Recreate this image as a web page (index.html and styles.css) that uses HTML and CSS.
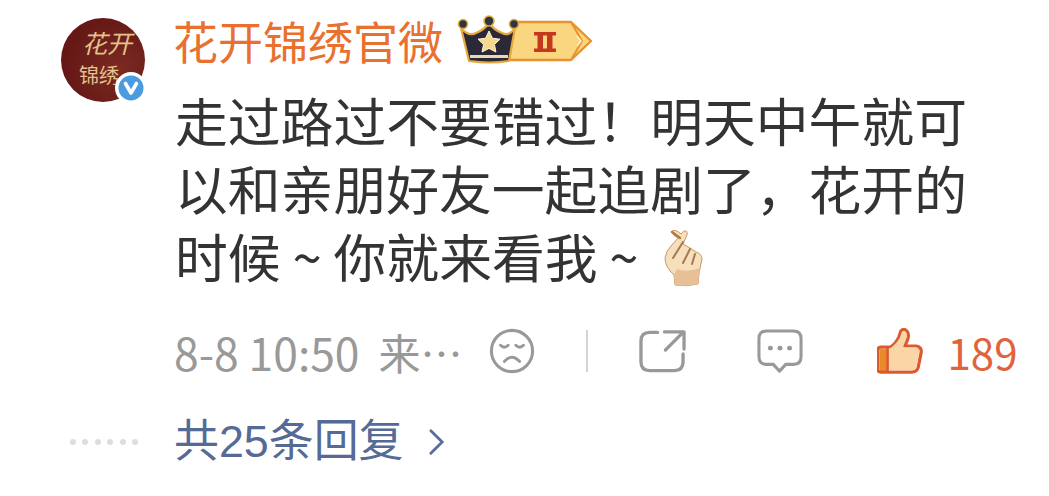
FILE: index.html
```html
<!DOCTYPE html>
<html lang="zh">
<head>
    <meta charset="UTF-8">
    <title>评论</title>
    <link rel="stylesheet" href="styles.css">
</head>
<body>
    <div class="comment">
        <div class="avatar">
            <div class="avatar-art">
                <span class="art-top">花开</span>
                <span class="art-bottom">锦绣</span>
            </div>
            <svg class="verified" viewBox="0 0 32 32">
                <circle cx="16" cy="16" r="16" fill="#fff"/>
                <circle cx="16" cy="16" r="12.5" fill="#4a9be0"/>
                <path d="M10.5 11.5 L16 21 L21.5 11.5" fill="none" stroke="#fff" stroke-width="3.6" stroke-linecap="round" stroke-linejoin="round"/>
            </svg>
        </div>
        <div class="main">
            <div class="name-row">
                <span class="name">花开锦绣官微</span>
                <svg class="vip" width="137" height="50" viewBox="0 0 137 50">
                    <path d="M58 7 H114 L134 26 L114 45 H52 Z" fill="#fbd680" stroke="#e8922e" stroke-width="2.4" stroke-linejoin="round"/>
                    <path d="M114 7 L125 26 L114 45" fill="none" stroke="#e8922e" stroke-width="2"/>
                    <path d="M120 21 L124 26 L120 31" fill="none" stroke="#fff3c8" stroke-width="1.5"/>
                    <path d="M77 17 H99 V20.5 H95.5 V33.5 H99 V37 H77 V33.5 H80.5 V20.5 H77 Z" fill="#c4391c"/>
                    <rect x="86" y="20.5" width="4" height="13" fill="#fbd680"/>
                    <path d="M4 13 Q12 22 19 18 Q27 15 32 8 Q37 15 45 18 Q52 22 58 13 L52 46 Q32 49 12 46 Z" fill="#2b2838" stroke="#e7a83e" stroke-width="2.2" stroke-linejoin="round"/>
                    <circle cx="6" cy="9" r="4.5" fill="#34323e" stroke="#d6b03f" stroke-width="1.6"/>
                    <circle cx="32" cy="6" r="5" fill="#34323e" stroke="#d6b03f" stroke-width="1.6"/>
                    <circle cx="57" cy="9" r="4.5" fill="#34323e" stroke="#d6b03f" stroke-width="1.6"/>
                    <path d="M32 16 L35.4 23.2 L43 24.2 L37.5 29.5 L38.9 37 L32 33.4 L25.1 37 L26.5 29.5 L21 24.2 L28.6 23.2 Z" fill="#f6d98c" stroke="#fff6d6" stroke-width="1"/>
                    <rect x="13" y="40" width="38" height="3" fill="#e9d9b0"/>
                </svg>
            </div>
            <p class="text">走过路过不要错过！明天中午就可以和亲朋好友一起追剧了，花开的时候 ~ 你就来看我 ~<svg class="emoji" width="42" height="58" viewBox="0 0 42 58">
                    <path d="M13 56 L12 46 Q3 38 3 29 Q4 22 9 17 L16 9 Q9 5 10 2 Q14 0 19 5 L22 2 Q26 1 25 6 L21 15 L28 19 L34 23 Q40 25 40 30 L37 44 L36 55 Q24 58 13 56 Z" fill="#f6dfbd" stroke="#c99868" stroke-width="1"/>
                    <path d="M15 40 Q24 44 38 39 L36 55 Q24 58 13 56 L12 46 Z" fill="#e8c096"/>
                    <path d="M21 13 L11 29 M28 20 L21 34 M33 25 L30 35" fill="none" stroke="#a87a4e" stroke-width="2" stroke-linecap="round"/>
                    <path d="M10 3 L18 9" fill="none" stroke="#b5793f" stroke-width="2.4" stroke-linecap="round"/>
                </svg>
            </p>
            <div class="meta">
                <span class="time">8-8 10:50</span>
                <span class="source">来…</span>
                <svg class="icon-sad" width="46" height="46" viewBox="0 0 48 48">
                    <circle cx="24" cy="24" r="21.5" fill="none" stroke="#999" stroke-width="3.2"/>
                    <path d="M12 18 Q16 22 20 18 M28 18 Q32 22 36 18 M16 35 Q24 26 32 35" fill="none" stroke="#999" stroke-width="3" stroke-linecap="round"/>
                </svg>
                <span class="divider"></span>
                <svg class="icon-share" width="47" height="44" viewBox="0 0 48 44">
                    <path d="M19 3 H11 Q2 3 2 12 V33 Q2 42 11 42 H36 Q45 42 45 33 V25" fill="none" stroke="#999" stroke-width="3.4" stroke-linecap="round"/>
                    <path d="M26 2.5 H46 V20 M45 3 L27 21" fill="none" stroke="#999" stroke-width="3.4" stroke-linecap="round" stroke-linejoin="round"/>
                </svg>
                <svg class="icon-reply" width="46" height="44" viewBox="0 0 48 46">
                    <path d="M10 2 H38 Q46 2 46 10 V29 Q46 37 38 37 H30 L23.5 44 L17 37 H10 Q2 37 2 29 V10 Q2 2 10 2 Z" fill="none" stroke="#999" stroke-width="3.2" stroke-linejoin="round"/>
                    <circle cx="14" cy="20" r="2.6" fill="#999"/>
                    <circle cx="24" cy="20" r="2.6" fill="#999"/>
                    <circle cx="34" cy="20" r="2.6" fill="#999"/>
                </svg>
                <svg class="icon-like" width="46" height="46" viewBox="0 0 48 48">
                    <path d="M3 22 H11 V45 H3 Z" fill="#e88a2a"/>
                    <path d="M11 20 H14 Q20 16 23 9 L25 3 Q28 0 31 3 Q34 6 32 12 L29 19 H41 Q47 20 46 26 L43 41 Q42 46 36 46 H4 Q1 46 1 43 V23 Q1 20 4 20 Z" fill="none" stroke="#dc5a30" stroke-width="3.4" stroke-linejoin="round"/>
                    <path d="M12 21 H14 Q20 17 24 10 L26 4 Q28 2 30 4 Q32 7 30 12 L27 20 H41 Q45 21 44 26 L41 41 Q40 44 36 44 H12 Z" fill="#fad5a6"/>
                    <path d="M11 20 V46" stroke="#dc5a30" stroke-width="2.8"/>
                </svg>
                <span class="count">189</span>
            </div>
        </div>
    </div>
    <div class="replies">
        <span class="dots"><i></i><i></i><i></i><i></i><i></i><i></i></span>
        <span class="more">共25条回复</span>
        <svg class="chevron" width="17" height="28" viewBox="0 0 18 28">
            <path d="M3 2 L15 14 L3 26" fill="none" stroke="#5a6e98" stroke-width="3" stroke-linecap="round"/>
        </svg>
    </div>
</body>
</html>
```

FILE: styles.css
```css
body {
    margin: 0;
    width: 1049px;
    height: 496px;
    overflow: hidden;
    background: #fff;
    font-family: "Noto Sans CJK SC", "Liberation Sans", sans-serif;
}
.comment {
    display: flex;
    gap: 28px;
    padding: 18px 0 0 61px;
}
.avatar {
    position: relative;
    width: 84px;
    height: 84px;
    flex-shrink: 0;
}
.avatar-art {
    width: 84px;
    height: 84px;
    border-radius: 50%;
    overflow: hidden;
    background: radial-gradient(circle at 70% 60%, #7a2a22, #651815 70%);
    color: #e2c18d;
    display: flex;
    flex-direction: column;
    align-items: center;
    padding-top: 6px;
    box-sizing: border-box;
}
.art-top {
    font-size: 25px;
    line-height: 36px;
    font-style: italic;
    margin-left: 8px;
}
.art-bottom {
    font-size: 20px;
    line-height: 30px;
    margin-left: -8px;
}
.verified {
    position: absolute;
    right: -2px;
    bottom: -2px;
    width: 32px;
    height: 32px;
}
.main {
    width: 850px;
    margin-top: -2px;
}
.name-row {
    display: flex;
    align-items: center;
    gap: 14px;
    height: 50px;
}
.name {
    font-size: 45px;
    line-height: 50px;
    color: #e9702e;
}
.vip {
    margin-top: -2px;
}
.text {
    margin: 19px 0 0 2px;
    width: 800px;
    height: 204px;
    font-size: 52.8px;
    line-height: 68px;
    color: #333;
}
.emoji {
    margin-left: 23px;
    vertical-align: -9px;
}
.meta {
    display: flex;
    align-items: center;
    margin-top: 37px;
    padding-left: 1px;
    height: 50px;
    color: #999;
    font-size: 42px;
}
.time {
    font-size: 44.4px;
}
.source {
    margin-left: 19px;
}
.icon-sad {
    margin-left: 26px;
}
.divider {
    width: 2px;
    height: 42px;
    background: #d4d4d4;
    margin: 0 51px 0 51px;
}
.icon-reply {
    margin-left: 71px;
}
.icon-like {
    margin-left: 74px;
}
.count {
    margin-left: 25px;
    color: #e0633c;
}
.replies {
    display: flex;
    align-items: center;
    padding: 41px 0 0 70px;
    height: 50px;
    color: #566a96;
}
.dots {
    display: flex;
    gap: 6.4px;
    width: 104px;
}
.dots i {
    width: 6px;
    height: 6px;
    border-radius: 50%;
    background: #ddd;
}
.more {
    font-family: "Liberation Sans", "Noto Sans CJK SC", sans-serif;
    font-size: 44.9px;
    line-height: 50px;
}
.chevron {
    margin-left: 24px;
}
```
